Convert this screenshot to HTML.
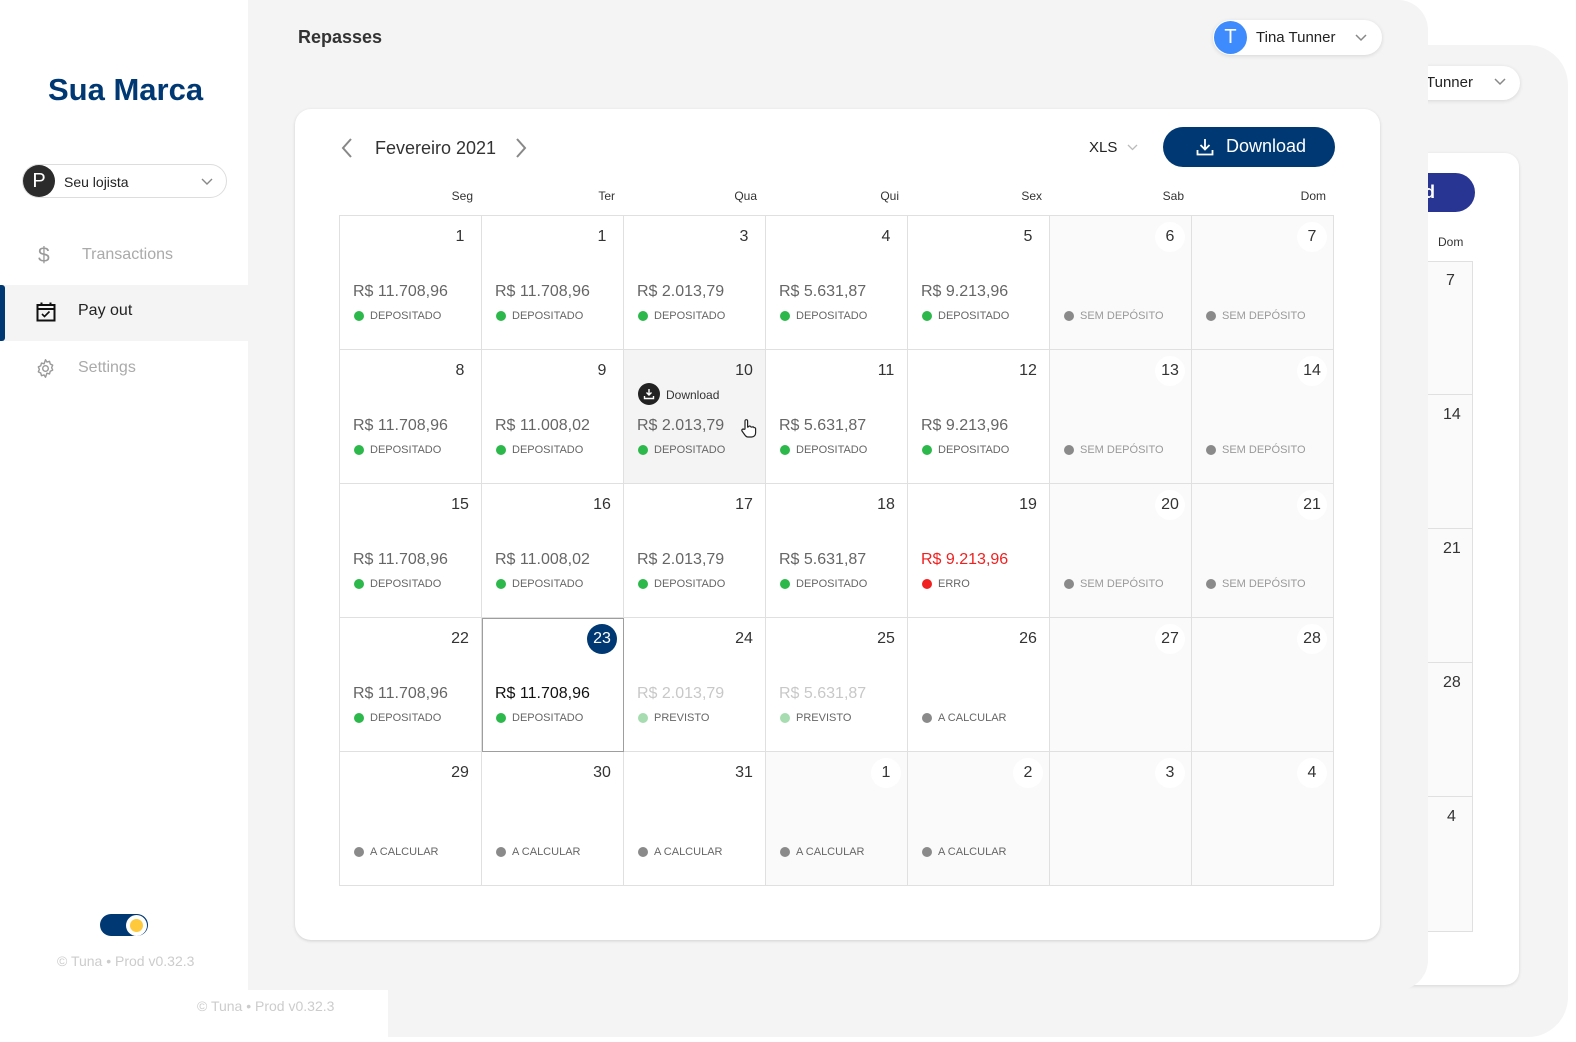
<!DOCTYPE html>
<html><head><meta charset="utf-8">
<style>
*{box-sizing:border-box;margin:0;padding:0}
body{width:1576px;height:1042px;position:relative;overflow:hidden;background:#fff;font-family:"Liberation Sans",Arial,sans-serif;color:#333}
.abs{position:absolute}
.backmain{left:388px;top:45px;width:1180px;height:992px;background:#f4f4f4;border-radius:0 40px 40px 0}
.backcard{left:1300px;top:153px;width:219px;height:832px;background:#fff;border-radius:14px;box-shadow:0 1px 3px rgba(0,0,0,.12)}
.backpill{left:1300px;top:66px;width:220px;height:34px;background:#fff;border-radius:17px;box-shadow:0 1px 4px rgba(0,0,0,.12)}
.backbtn{left:1300px;top:173px;width:175px;height:39px;background:#283593;border-radius:20px;color:#fff;font-size:18px;font-weight:bold}
.side{left:0;top:0;width:248px;height:990px;background:#fff}
.main{left:248px;top:0;width:1180px;height:990px;background:#f4f4f4;border-radius:0 30px 30px 0}
.card{left:295px;top:109px;width:1085px;height:831px;background:#fff;border-radius:16px;box-shadow:0 1px 3px rgba(0,0,0,.15)}
.grid{left:339px;top:215px;width:995px;height:671px;border-left:1px solid #e0e0e0;border-top:1px solid #e0e0e0;display:grid;grid-template-columns:repeat(7,1fr);grid-template-rows:repeat(5,1fr)}
.c{position:relative;border-right:1px solid #e0e0e0;border-bottom:1px solid #e0e0e0;background:#fff}
.c.g{background:#fafafa}
.c.h{background:#f4f4f4}
.c.sel{outline:1px solid #9e9e9e;outline-offset:-1px;z-index:2}
.n{position:absolute;top:6px;right:6px;width:30px;height:30px;border-radius:50%;text-align:center;line-height:30px;font-size:16px;color:#333}
.g .n{background:#fff}
.sel .n{background:#003873;color:#fff}
.a{position:absolute;left:13px;top:67px;font-size:16px;color:#666}
.s{position:absolute;left:14px;top:94px;font-size:11px;color:#666;display:flex;align-items:center}
.s i{display:inline-block;width:10px;height:10px;border-radius:50%;background:#2db84b;margin-right:6px}
.s i.gr{background:#8a8a8a}.s i.lg{background:#a6dcb0}.s i.r{background:#f02020}
.wd{top:189px;font-size:12px;color:#333;text-align:right;width:100px}
</style></head><body>

<div class="abs backmain"></div>
<div class="abs backpill"><span class="abs" style="left:126px;top:8px;font-size:15px;color:#222">Tunner</span><svg class="abs" style="left:194px;top:12px" width="12" height="8" viewBox="0 0 12 8"><path d="M1 1l5 5 5-5" stroke="#888" stroke-width="1.5" fill="none"/></svg></div>
<div class="abs backcard"></div>
<div class="abs backbtn"><span class="abs" style="left:114px;top:9px">ad</span></div>
<div class="abs" style="left:1438px;top:235px;font-size:12px">Dom</div>
<div class="abs" style="left:1380px;top:261px;width:93px;height:671px;border-top:1px solid #e0e0e0;border-right:1px solid #e0e0e0;border-bottom:1px solid #e0e0e0;background:#fafafa"></div>
<div class="abs" style="left:1380px;top:394px;width:93px;height:1px;background:#e0e0e0"></div>
<div class="abs" style="left:1380px;top:528px;width:93px;height:1px;background:#e0e0e0"></div>
<div class="abs" style="left:1380px;top:662px;width:93px;height:1px;background:#e0e0e0"></div>
<div class="abs" style="left:1380px;top:796px;width:93px;height:1px;background:#e0e0e0"></div>
<div class="abs" style="left:1446px;top:272px;font-size:16px">7</div>
<div class="abs" style="left:1443px;top:406px;font-size:16px">14</div>
<div class="abs" style="left:1443px;top:540px;font-size:16px">21</div>
<div class="abs" style="left:1443px;top:674px;font-size:16px">28</div>
<div class="abs" style="left:1447px;top:808px;font-size:16px">4</div>
<div class="abs" style="left:197px;top:998px;font-size:14px;color:#ccc">© Tuna • Prod v0.32.3</div>

<div class="abs side">
  <div class="abs" style="left:48px;top:72px;font-size:31px;font-weight:bold;color:#003873;font-family:'Liberation Sans',sans-serif">Sua Marca</div>
  <div class="abs" style="left:22px;top:164px;width:205px;height:34px;border:1px solid #ddd;border-radius:17px;background:#fff">
    <div class="abs" style="left:0;top:0;width:32px;height:32px;border-radius:50%;background:#2b2b2b;color:#fff;font-size:20px;line-height:32px;text-align:center">P</div>
    <span class="abs" style="left:41px;top:9px;font-size:14px;color:#222">Seu lojista</span>
    <svg class="abs" style="left:178px;top:13px" width="12" height="8" viewBox="0 0 12 8"><path d="M1 1l5 5 5-5" stroke="#888" stroke-width="1.4" fill="none"/></svg>
  </div>
  <div class="abs" style="left:38px;top:244px;font-size:21px;color:#999">$</div>
  <div class="abs" style="left:82px;top:246px;font-size:16px;color:#aaa">Transactions</div>
  <div class="abs" style="left:0;top:285px;width:248px;height:56px;background:#f4f4f4"></div>
  <div class="abs" style="left:0;top:285px;width:5px;height:56px;background:#003873;border-radius:0 3px 3px 0"></div>
  <svg class="abs" style="left:36px;top:302px" width="20" height="20" viewBox="0 0 20 20"><rect x="1.5" y="3" width="17" height="15.5" fill="none" stroke="#111" stroke-width="2"/><line x1="1.5" y1="7" x2="18.5" y2="7" stroke="#111" stroke-width="2"/><line x1="5.5" y1="0.5" x2="5.5" y2="4" stroke="#111" stroke-width="2"/><line x1="14.5" y1="0.5" x2="14.5" y2="4" stroke="#111" stroke-width="2"/><path d="M6 12l2.5 2.5 5-5" stroke="#111" stroke-width="1.6" fill="none"/></svg>
  <div class="abs" style="left:78px;top:302px;font-size:16px;color:#222">Pay out</div>
  <svg class="abs" style="left:35px;top:358px" width="21" height="21" viewBox="0 0 24 24"><circle cx="12" cy="12" r="3.2" fill="none" stroke="#999" stroke-width="1.6"/><path d="M12 2l1.6 2.6 3-.8.8 3 2.8 1.4-1.2 2.8 1.2 2.8-2.8 1.4-.8 3-3-.8L12 22l-1.6-2.6-3 .8-.8-3-2.8-1.4 1.2-2.8-1.2-2.8 2.8-1.4.8-3 3 .8z" fill="none" stroke="#999" stroke-width="1.6" stroke-linejoin="round"/></svg>
  <div class="abs" style="left:78px;top:359px;font-size:16px;color:#aaa">Settings</div>
  <div class="abs" style="left:100px;top:914px;width:48px;height:22px;border-radius:11px;background:#003873"></div>
  <div class="abs" style="left:126px;top:915px;width:21px;height:21px;border-radius:50%;background:#fff"></div>
  <div class="abs" style="left:130px;top:919px;width:13px;height:13px;border-radius:50%;background:#ffc93c"></div>
  <div class="abs" style="left:57px;top:953px;font-size:14px;color:#ccc">© Tuna • Prod v0.32.3</div>
</div>

<div class="abs main"></div>
<div class="abs" style="left:298px;top:27px;font-size:18px;font-weight:bold;color:#333">Repasses</div>
<div class="abs" style="left:1213px;top:20px;width:169px;height:35px;background:#fff;border-radius:18px;box-shadow:0 1px 4px rgba(0,0,0,.12)">
  <div class="abs" style="left:1px;top:1px;width:33px;height:33px;border-radius:50%;background:#3d8bfd;color:#fff;font-size:20px;line-height:33px;text-align:center">T</div>
  <span class="abs" style="left:43px;top:9px;font-size:15px;color:#222">Tina Tunner</span>
  <svg class="abs" style="left:142px;top:14px" width="12" height="8" viewBox="0 0 12 8"><path d="M1 1l5 5 5-5" stroke="#888" stroke-width="1.5" fill="none"/></svg>
</div>

<div class="abs card"></div>
<svg class="abs" style="left:340px;top:138px" width="14" height="20" viewBox="0 0 14 20"><path d="M11 1L3 10l8 9" stroke="#888" stroke-width="2" fill="none"/></svg>
<div class="abs" style="left:375px;top:138px;font-size:18px;color:#333">Fevereiro 2021</div>
<svg class="abs" style="left:514px;top:138px" width="14" height="20" viewBox="0 0 14 20"><path d="M3 1l8 9-8 9" stroke="#888" stroke-width="2" fill="none"/></svg>
<div class="abs" style="left:1089px;top:139px;font-size:15px;color:#222">XLS</div>
<svg class="abs" style="left:1127px;top:144px" width="11" height="7" viewBox="0 0 11 7"><path d="M1 1l4.5 4.5L10 1" stroke="#bbb" stroke-width="1.3" fill="none"/></svg>
<div class="abs" style="left:1163px;top:127px;width:172px;height:40px;border-radius:20px;background:#003873;color:#fff">
  <svg class="abs" style="left:33px;top:11px" width="18" height="18" viewBox="0 0 18 18"><path d="M9 1v10M4.5 7L9 11.5 13.5 7M1.5 12v4.5h15V12" stroke="#fff" stroke-width="1.8" fill="none"/></svg>
  <span class="abs" style="left:63px;top:9px;font-size:18px">Download</span>
</div>

<div class="abs wd" style="left:373px">Seg</div>
<div class="abs wd" style="left:515px">Ter</div>
<div class="abs wd" style="left:657px">Qua</div>
<div class="abs wd" style="left:799px">Qui</div>
<div class="abs wd" style="left:942px">Sex</div>
<div class="abs wd" style="left:1084px">Sab</div>
<div class="abs wd" style="left:1226px">Dom</div>

<div class="abs grid">
<div class="c"><div class="n">1</div><div class="a">R$ 11.708,96</div><div class="s"><i></i>DEPOSITADO</div></div>
<div class="c"><div class="n">1</div><div class="a">R$ 11.708,96</div><div class="s"><i></i>DEPOSITADO</div></div>
<div class="c"><div class="n">3</div><div class="a">R$ 2.013,79</div><div class="s"><i></i>DEPOSITADO</div></div>
<div class="c"><div class="n">4</div><div class="a">R$ 5.631,87</div><div class="s"><i></i>DEPOSITADO</div></div>
<div class="c"><div class="n">5</div><div class="a">R$ 9.213,96</div><div class="s"><i></i>DEPOSITADO</div></div>
<div class="c g"><div class="n">6</div><div class="s" style="color:#999"><i class="gr"></i>SEM DEPÓSITO</div></div>
<div class="c g"><div class="n">7</div><div class="s" style="color:#999"><i class="gr"></i>SEM DEPÓSITO</div></div>

<div class="c"><div class="n">8</div><div class="a">R$ 11.708,96</div><div class="s"><i></i>DEPOSITADO</div></div>
<div class="c"><div class="n">9</div><div class="a">R$ 11.008,02</div><div class="s"><i></i>DEPOSITADO</div></div>
<div class="c h"><div class="n">10</div>
  <div class="abs" style="left:14px;top:33px;width:22px;height:22px;border-radius:50%;background:#222"><svg class="abs" style="left:5px;top:5px" width="12" height="12" viewBox="0 0 12 12"><path d="M6 1v6M3.5 4.5L6 7l2.5-2.5M1.5 8v2.5h9V8" stroke="#fff" stroke-width="1.4" fill="none"/></svg></div>
  <div class="abs" style="left:42px;top:38px;font-size:12px;color:#333">Download</div>
  <div class="a">R$ 2.013,79</div><div class="s"><i></i>DEPOSITADO</div>
  <svg class="abs" style="left:115px;top:68px" width="18" height="20" viewBox="0 0 18 20"><path d="M6 11V3a1.3 1.3 0 012.6 0v6l1-.3a1.3 1.3 0 012.4.3l1 .1a1.3 1.3 0 012 .5 1.3 1.3 0 011.6 1V15c0 2.5-2 4-4 4H9c-1.5 0-2.5-1-3.5-2.5L3 13a1.3 1.3 0 012-1.6z" fill="#fff" stroke="#222" stroke-width="1.2"/></svg>
</div>
<div class="c"><div class="n">11</div><div class="a">R$ 5.631,87</div><div class="s"><i></i>DEPOSITADO</div></div>
<div class="c"><div class="n">12</div><div class="a">R$ 9.213,96</div><div class="s"><i></i>DEPOSITADO</div></div>
<div class="c g"><div class="n">13</div><div class="s" style="color:#999"><i class="gr"></i>SEM DEPÓSITO</div></div>
<div class="c g"><div class="n">14</div><div class="s" style="color:#999"><i class="gr"></i>SEM DEPÓSITO</div></div>

<div class="c"><div class="n">15</div><div class="a">R$ 11.708,96</div><div class="s"><i></i>DEPOSITADO</div></div>
<div class="c"><div class="n">16</div><div class="a">R$ 11.008,02</div><div class="s"><i></i>DEPOSITADO</div></div>
<div class="c"><div class="n">17</div><div class="a">R$ 2.013,79</div><div class="s"><i></i>DEPOSITADO</div></div>
<div class="c"><div class="n">18</div><div class="a">R$ 5.631,87</div><div class="s"><i></i>DEPOSITADO</div></div>
<div class="c"><div class="n">19</div><div class="a" style="color:#f02020">R$ 9.213,96</div><div class="s"><i class="r"></i>ERRO</div></div>
<div class="c g"><div class="n">20</div><div class="s" style="color:#999"><i class="gr"></i>SEM DEPÓSITO</div></div>
<div class="c g"><div class="n">21</div><div class="s" style="color:#999"><i class="gr"></i>SEM DEPÓSITO</div></div>

<div class="c"><div class="n">22</div><div class="a">R$ 11.708,96</div><div class="s"><i></i>DEPOSITADO</div></div>
<div class="c sel"><div class="n">23</div><div class="a" style="color:#111">R$ 11.708,96</div><div class="s"><i></i>DEPOSITADO</div></div>
<div class="c"><div class="n">24</div><div class="a" style="color:#c8c8c8">R$ 2.013,79</div><div class="s"><i class="lg"></i>PREVISTO</div></div>
<div class="c"><div class="n">25</div><div class="a" style="color:#c8c8c8">R$ 5.631,87</div><div class="s"><i class="lg"></i>PREVISTO</div></div>
<div class="c"><div class="n">26</div><div class="s"><i class="gr"></i>A CALCULAR</div></div>
<div class="c g"><div class="n">27</div></div>
<div class="c g"><div class="n">28</div></div>

<div class="c"><div class="n">29</div><div class="s"><i class="gr"></i>A CALCULAR</div></div>
<div class="c"><div class="n">30</div><div class="s"><i class="gr"></i>A CALCULAR</div></div>
<div class="c"><div class="n">31</div><div class="s"><i class="gr"></i>A CALCULAR</div></div>
<div class="c g"><div class="n">1</div><div class="s"><i class="gr"></i>A CALCULAR</div></div>
<div class="c g"><div class="n">2</div><div class="s"><i class="gr"></i>A CALCULAR</div></div>
<div class="c g"><div class="n">3</div></div>
<div class="c g"><div class="n">4</div></div>
</div>
</body></html>
